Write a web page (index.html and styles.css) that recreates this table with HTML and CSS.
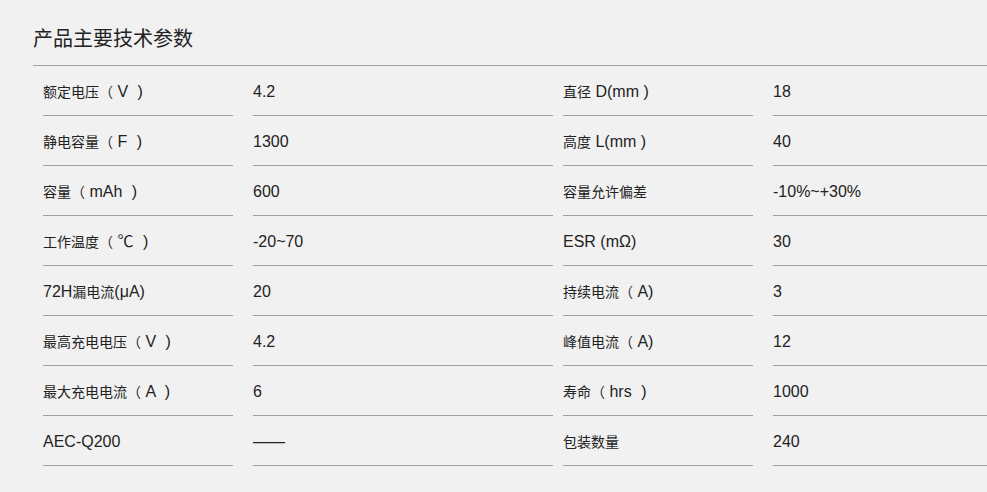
FILE: index.html
```html
<!DOCTYPE html>
<html lang="zh-CN">
<head>
<meta charset="utf-8">
<title>产品主要技术参数</title>
<link rel="stylesheet" href="styles.css">
</head>
<body>
<div class="wrap">
  <h2 class="title">产品主要技术参数</h2>
  <div class="specs">
    <div class="row">
      <div class="k">额定电压（<span class="en"> V <span class="rp">)</span></span></div><div class="v">4.2</div>
      <div class="k">直径<span class="en"> D(mm )</span></div><div class="v">18</div>
    </div>
    <div class="row">
      <div class="k">静电容量（<span class="en"> F <span class="rp">)</span></span></div><div class="v">1300</div>
      <div class="k">高度<span class="en"> L(mm )</span></div><div class="v">40</div>
    </div>
    <div class="row">
      <div class="k">容量（<span class="en"> mAh <span class="rp">)</span></span></div><div class="v">600</div>
      <div class="k">容量允许偏差</div><div class="v">-10%~+30%</div>
    </div>
    <div class="row">
      <div class="k">工作温度（<span class="en"> ℃ <span class="rp">)</span></span></div><div class="v">-20~70</div>
      <div class="k"><span class="en">ESR (mΩ)</span></div><div class="v">30</div>
    </div>
    <div class="row">
      <div class="k"><span class="en">72H</span>漏电流<span class="en">(μA)</span></div><div class="v">20</div>
      <div class="k">持续电流（<span class="en"> A)</span></div><div class="v">3</div>
    </div>
    <div class="row">
      <div class="k">最高充电电压（<span class="en"> V <span class="rp">)</span></span></div><div class="v">4.2</div>
      <div class="k">峰值电流（<span class="en"> A)</span></div><div class="v">12</div>
    </div>
    <div class="row">
      <div class="k">最大充电电流（<span class="en"> A <span class="rp">)</span></span></div><div class="v">6</div>
      <div class="k">寿命（<span class="en"> hrs <span class="rp">)</span></span></div><div class="v">1000</div>
    </div>
    <div class="row">
      <div class="k"><span class="en">AEC-Q200</span></div><div class="v">——</div>
      <div class="k">包装数量</div><div class="v">240</div>
    </div>
  </div>
</div>
</body>
</html>
```
FILE: styles.css
```css
html, body {
  margin: 0;
  padding: 0;
  background: #f1f1f1;
  overflow: hidden;
}
body {
  font-family: "Liberation Sans", "Noto Sans CJK SC", sans-serif;
  color: #222;
}
.wrap {
  padding-left: 33px;
  width: 1100px;
}
.title {
  margin: 0;
  padding: 28px 0 15px 0;
  font-size: 20px;
  line-height: 22px;
  font-weight: normal;
  border-bottom: 1px solid #a0a0a0;
}
.row {
  display: flex;
}
.k, .v {
  box-sizing: border-box;
  height: 50px;
  padding-top: 16px;
  line-height: 20px;
  border-bottom: 1px solid #a0a0a0;
  white-space: pre;
}
.k {
  width: 190px;
  margin-left: 10px;
  font-size: 14px;
}
.v {
  width: 300px;
  margin-left: 20px;
  font-size: 16px;
}
.en {
  font-size: 16px;
}
.rp {
  padding-left: 5px;
}
```
